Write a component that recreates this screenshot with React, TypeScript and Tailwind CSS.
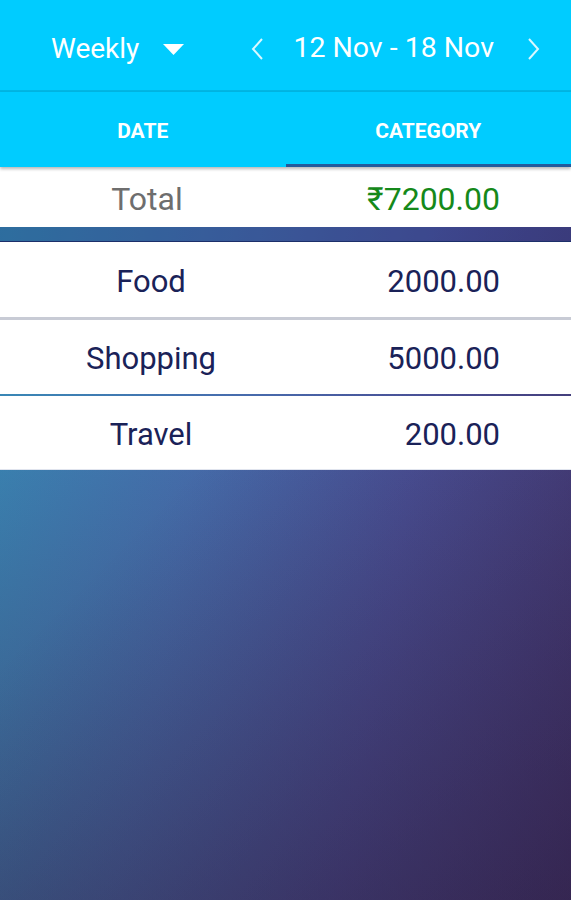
import React from "react";

export default function App() {
  const font = "font-['Roboto','Noto_Sans',sans-serif]";
  return (
    <div
      className={`${font} relative w-[571px] h-[900px] overflow-hidden bg-[image:linear-gradient(135deg,rgba(30,15,45,0)_45%,rgba(30,15,45,0.35)_100%),linear-gradient(to_bottom,rgba(50,25,70,0)_40%,rgba(55,35,70,0.45)_100%),linear-gradient(100deg,#3592bb_0%,#4672b2_38%,#4d56a0_68%,#4a3f7e_100%)]`}
    >
      {/* Top bar */}
      <div className="h-[92px] pt-[7px] bg-[#00ccff] border-b-2 border-[#00b6e4] flex items-center text-white">
        <span className="ml-[51px] text-[28px] leading-none">Weekly</span>
        <svg className="ml-[24px] mt-[1px]" width="21" height="11" viewBox="0 0 21 11">
          <polygon points="0,0 21,0 10.5,11" fill="#ffffff" />
        </svg>
        <svg className="ml-[67px]" width="14" height="24" viewBox="0 0 14 24">
          <polyline points="11,2 2,12 11,22" fill="none" stroke="rgba(255,255,255,0.85)" strokeWidth="2" />
        </svg>
        <span className="ml-[28px] text-[28.5px] leading-none">12 Nov - 18 Nov</span>
        <svg className="ml-[32px]" width="14" height="24" viewBox="0 0 14 24">
          <polyline points="3,2 12,12 3,22" fill="none" stroke="rgba(255,255,255,0.85)" strokeWidth="2" />
        </svg>
      </div>

      {/* Tabs */}
      <div className="relative z-10 h-[75px] pt-[4px] bg-[#00ccff] flex shadow-[0_2px_3px_rgba(0,0,0,0.28)]">
        <div className="flex-1 flex items-center justify-center text-white font-bold text-[21px]">
          DATE
        </div>
        <div className="relative flex-1 flex items-center justify-center text-white font-bold text-[21px]">
          CATEGORY
          <div className="absolute left-0 right-0 bottom-0 h-[3px] bg-[#235a9c]" />
        </div>
      </div>

      {/* Total */}
      <div className="h-[60px] pt-[4px] bg-white flex items-center text-[32px]">
        <div className="w-[294px] text-center text-[#6e6e6e]">Total</div>
        <div className="flex-1 text-right pr-[71px] text-[#15891a]">₹7200.00</div>
      </div>

      {/* strip */}
      <div className="h-[15px] bg-[rgba(20,30,90,0.28)] border-b border-[#1c2f6a]" />

      {/* Rows */}
      <div className="flex flex-col text-[31px] text-[#1a2258]">
        <div className="h-[78px] pt-[6px] bg-white border-b-[3px] border-[#c8cbd5] flex items-center">
          <div className="w-[302px] text-center">Food</div>
          <div className="flex-1 text-right pr-[71px]">2000.00</div>
        </div>
        <div className="h-[74px] pt-[4px] bg-white flex items-center">
          <div className="w-[302px] text-center">Shopping</div>
          <div className="flex-1 text-right pr-[71px]">5000.00</div>
        </div>
        <div className="h-[74px] pt-[5px] mt-[2px] bg-white flex items-center border-b border-[#e0e4ee]">
          <div className="w-[302px] text-center">Travel</div>
          <div className="flex-1 text-right pr-[71px]">200.00</div>
        </div>
      </div>
    </div>
  );
}
